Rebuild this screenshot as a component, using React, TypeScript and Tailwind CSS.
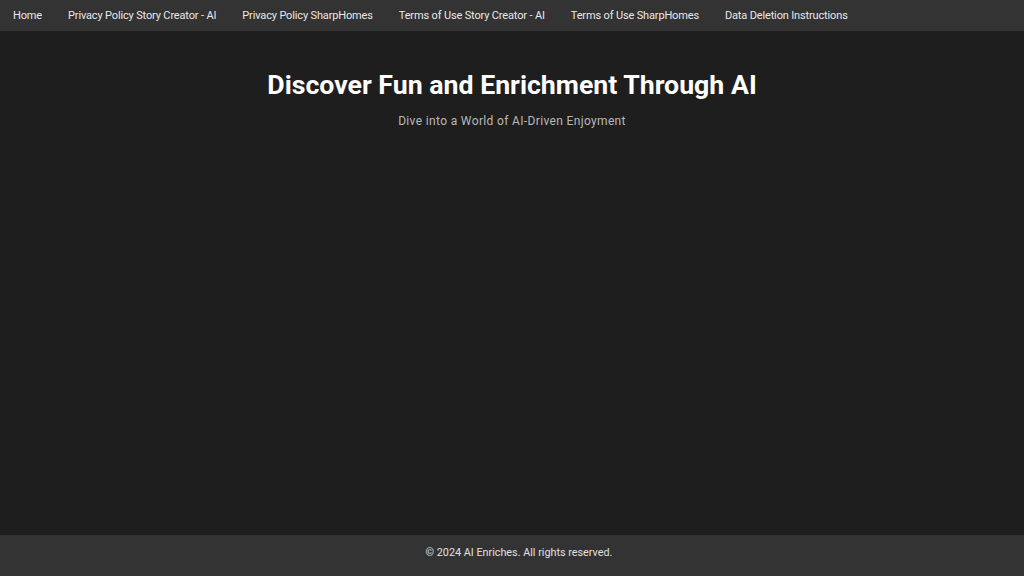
const links = [
  "Home",
  "Privacy Policy Story Creator - AI",
  "Privacy Policy SharpHomes",
  "Terms of Use Story Creator - AI",
  "Terms of Use SharpHomes",
  "Data Deletion Instructions",
];

export default function App() {
  return (
    <div className="flex min-h-screen flex-col bg-[#1e1e1e] font-['Roboto',sans-serif] text-white">
      <nav className="flex h-[31px] items-center bg-[#333333] pt-[2px]">
        {links.map((l) => (
          <a key={l} href="#" className="px-[13px] text-[11px] tracking-[-0.15px] text-[#e8e8e8]">
            {l}
          </a>
        ))}
      </nav>
      <main className="flex flex-1 flex-col items-center pt-[36px]">
        <h1 className="text-[26.7px] font-bold leading-[36px]">Discover Fun and Enrichment Through AI</h1>
        <p className="mt-[9px] text-[12px] tracking-[0.35px] text-[#b8b8b8]">Dive into a World of AI-Driven Enjoyment</p>
      </main>
      <footer className="flex h-[41px] items-center justify-center bg-[#333333] pb-[4px] pl-[14px] text-[10.8px] text-[#e0e0e0]">
        © 2024 AI Enriches. All rights reserved.
      </footer>
    </div>
  );
}
